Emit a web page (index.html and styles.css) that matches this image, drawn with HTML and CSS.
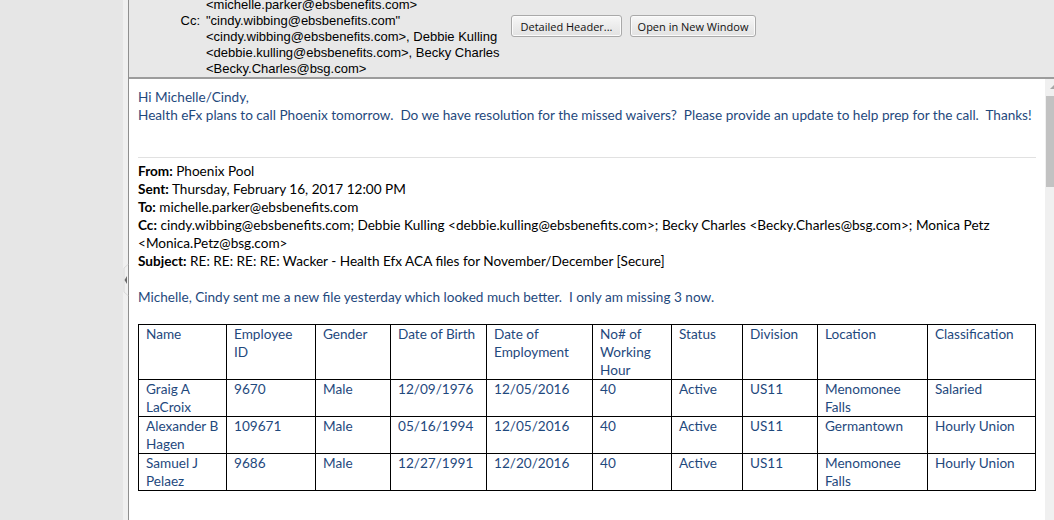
FILE: index.html
```html
<!DOCTYPE html>
<html>
<head>
<meta charset="utf-8">
<link rel="stylesheet" href="styles.css">
</head>
<body>
<div class="app">
  <div class="sidebar"></div>
  <div class="splitter">
    <div class="grip">
      <svg width="6" height="32" viewBox="0 0 6 32"><path d="M5.5 0 L1 4 L1 28 L5.5 32" fill="none" stroke="#d8d8d8" stroke-width="1"/><path d="M4 12 L1.5 16 L4 20 Z" fill="#6a6a6a"/></svg>
    </div>
  </div>
  <div class="main">
    <div class="header">
      <div class="fields">
        <div class="label"></div>
        <div class="value">&lt;michelle.parker@ebsbenefits.com&gt;</div>
        <div class="label">Cc:</div>
        <div class="value">"cindy.wibbing@ebsbenefits.com"<br>&lt;cindy.wibbing@ebsbenefits.com&gt;, Debbie Kulling<br>&lt;debbie.kulling@ebsbenefits.com&gt;, Becky Charles<br>&lt;Becky.Charles@bsg.com&gt;</div>
      </div>
      <div class="actions">
        <button class="btn btn-detail">Detailed Header...</button>
        <button class="btn btn-open">Open in New Window</button>
      </div>
    </div>
    <div class="content">
      <div class="message">
        <p>Hi Michelle/Cindy,</p>
        <p>Health eFx plans to call Phoenix tomorrow.&nbsp; Do we have resolution for the missed waivers?&nbsp; Please provide an update to help prep for the call.&nbsp; Thanks!</p>
        <div class="quoted">
          <p><b>From:</b> Phoenix Pool</p>
          <p><b>Sent:</b> Thursday, February 16, 2017 12:00 PM</p>
          <p><b>To:</b> michelle.parker@ebsbenefits.com</p>
          <p><b>Cc:</b> cindy.wibbing@ebsbenefits.com; Debbie Kulling &lt;debbie.kulling@ebsbenefits.com&gt;; Becky Charles &lt;Becky.Charles@bsg.com&gt;; Monica Petz &lt;Monica.Petz@bsg.com&gt;</p>
          <p><b>Subject:</b> RE: RE: RE: RE: Wacker - Health Efx ACA files for November/December [Secure]</p>
        </div>
        <p class="note">Michelle, Cindy sent me a new file yesterday which looked much better.&nbsp; I only am missing 3 now.</p>
        <table class="grid">
          <colgroup>
            <col class="c1"><col class="c2"><col class="c3"><col class="c4"><col class="c5"><col class="c6"><col class="c7"><col class="c8"><col class="c9"><col class="c10">
          </colgroup>
          <tr class="head">
            <td>Name</td><td>Employee ID</td><td>Gender</td><td>Date of Birth</td><td>Date of Employment</td><td>No# of Working Hour</td><td>Status</td><td>Division</td><td>Location</td><td>Classification</td>
          </tr>
          <tr>
            <td>Graig A LaCroix</td><td>9670</td><td>Male</td><td>12/09/1976</td><td>12/05/2016</td><td>40</td><td>Active</td><td>US11</td><td>Menomonee Falls</td><td>Salaried</td>
          </tr>
          <tr>
            <td>Alexander B Hagen</td><td>109671</td><td>Male</td><td>05/16/1994</td><td>12/05/2016</td><td>40</td><td>Active</td><td>US11</td><td>Germantown</td><td>Hourly Union</td>
          </tr>
          <tr>
            <td>Samuel J Pelaez</td><td>9686</td><td>Male</td><td>12/27/1991</td><td>12/20/2016</td><td>40</td><td>Active</td><td>US11</td><td>Menomonee Falls</td><td>Hourly Union</td>
          </tr>
        </table>
      </div>
      <div class="scrollbar">
        <div class="arrow"></div>
        <div class="thumb"></div>
      </div>
    </div>
  </div>
</div>
</body>
</html>
```

FILE: styles.css
```css
html, body {
  margin: 0;
  padding: 0;
  background: #ffffff;
}
body {
  width: 1054px;
  height: 520px;
  overflow: hidden;
}
.app {
  display: flex;
  height: 520px;
}
.sidebar {
  width: 123px;
  background: #e6e6e6;
}
.splitter {
  width: 5px;
  background: #f0f0f0;
  position: relative;
}
.grip {
  position: absolute;
  left: 0;
  top: 264px;
  width: 6px;
  height: 32px;
}
.grip svg { display: block; }
.main {
  flex: 1;
  display: flex;
  flex-direction: column;
  border-left: 1px solid #8f8f8f;
  min-width: 0;
}
.header {
  height: 77px;
  flex: none;
  background: #e8e8e8;
  border-bottom: 2px solid #9c9c9c;
  display: flex;
  overflow: hidden;
  font-family: "Liberation Sans", Arial, sans-serif;
  font-size: 13px;
  color: #000;
}
.fields {
  width: 382px;
  display: grid;
  grid-template-columns: 71px 1fr;
  column-gap: 6px;
  margin-top: -3px;
  line-height: 16px;
  align-content: start;
  white-space: nowrap;
}
.label {
  text-align: right;
}
.actions {
  display: flex;
  gap: 8px;
  margin-top: 15px;
  align-items: flex-start;
}
.btn {
  height: 22px;
  padding: 0;
  border: 1px solid #a9a9a9;
  border-radius: 3px;
  background: linear-gradient(#f7f7f7, #ececec 50%, #e2e2e2);
  font-family: "Open Sans", "Liberation Sans", sans-serif;
  font-size: 11px;
  color: #111;
  box-shadow: inset 0 0 0 1px #fbfbfb;
}
.btn-detail { width: 111px; }
.btn-open { width: 126px; }
.content {
  flex: 1;
  display: flex;
  min-height: 0;
}
.message {
  flex: 1;
  min-width: 0;
  padding: 9px 9px 0 9px;
  font-family: Lato, "Open Sans", sans-serif;
  font-size: 13.6px;
  line-height: 18px;
  color: #1f497d;
  overflow: hidden;
}
.message p {
  margin: 0;
}
.quoted {
  margin-top: 33px;
  border-top: 1px solid #e1e1e1;
  padding-top: 4px;
  color: #000;
}
.note {
  margin-top: 18px !important;
}
.grid {
  margin-top: 18px;
  border-collapse: collapse;
  table-layout: fixed;
  width: 897px;
  color: #1f497d;
}
.grid td {
  border: 1px solid #000;
  padding: 0 7px;
  vertical-align: top;
  line-height: 18px;
}
.grid tr.head td { height: 54px; }
.grid td { height: 36px; }
.c1 { width: 88px; }
.c2 { width: 89px; }
.c3 { width: 75px; }
.c4 { width: 96px; }
.c5 { width: 106px; }
.c6 { width: 79px; }
.c7 { width: 71px; }
.c8 { width: 75px; }
.c9 { width: 110px; }
.c10 { width: 108px; }
.scrollbar {
  width: 9px;
  flex: none;
  background: #f0f0f0;
  display: flex;
  flex-direction: column;
  align-items: flex-end;
}
.arrow {
  margin-top: 6px;
  width: 0;
  height: 0;
  border-left: 4px solid transparent;
  border-bottom: 4px solid #a6a6a6;
}
.thumb {
  margin-top: 7px;
  width: 8px;
  height: 91px;
  background: #c2c2c2;
}
```
